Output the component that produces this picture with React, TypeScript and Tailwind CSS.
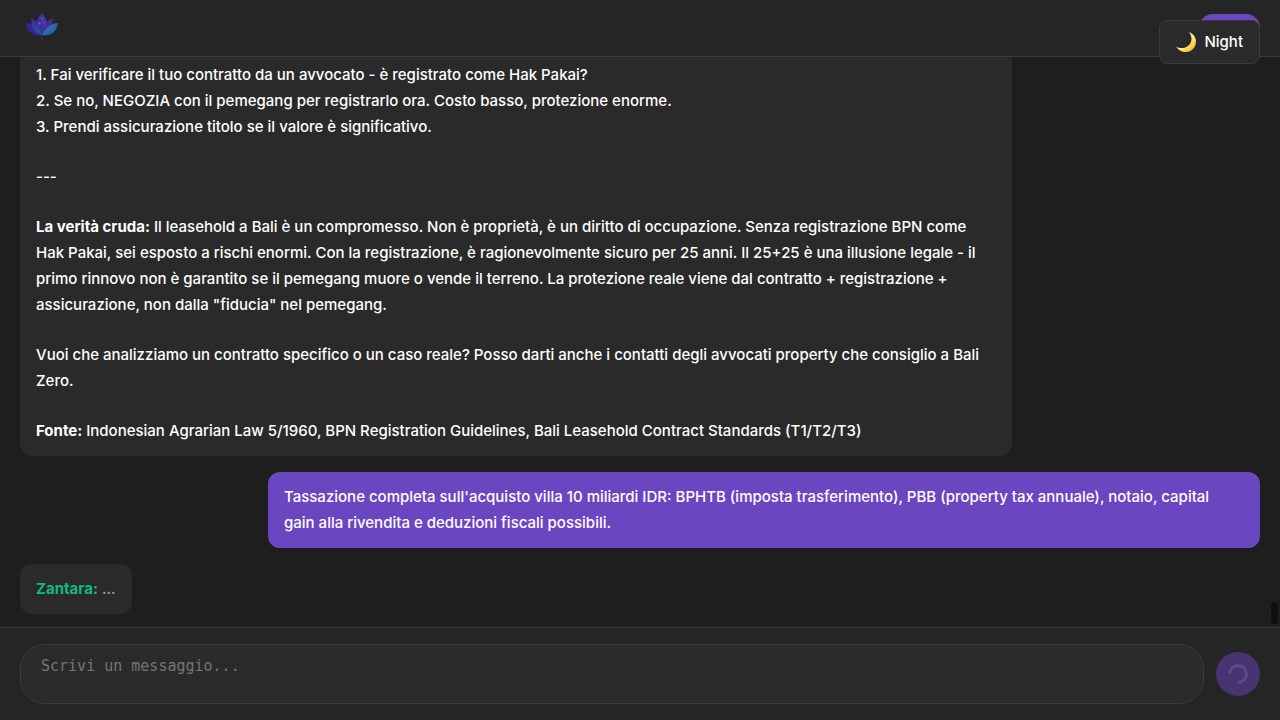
import type { ReactNode } from "react";

function LotusLogo() {
  return (
    <svg viewBox="0 0 36 36" className="h-9 w-9" aria-hidden="true">
      <path d="M17.700 24v8" stroke="#3d2a70" strokeWidth="1" />
      <path d="M2 13c1 6 4 11 10 12 2.500.4 4.500.5 6 .3C16 18 10 13 2 13z" fill="#33269a" />
      <path d="M34 13c-1 6-4 11-10 12-2.500.4-4.500.5-6 .3C20 18 26 13 34 13z" fill="#2a62a6" />
      <path d="M7.500 8c-.5 5 1 11 5 15 2 1.500 4 2 5.500 2C17 17 13 11 7.500 8z" fill="#41308f" />
      <path d="M28.500 8c.5 5-1 11-5 15-2 1.500-4 2-5.500 2C19 17 23 11 28.500 8z" fill="#432c96" />
      <path d="M18 3c-3.500 3.500-5.500 7.500-5.500 11.500 0 4 2.500 7.500 5.500 10.500 3-3 5.500-6.500 5.500-10.500C23.500 10.500 21.500 6.500 18 3z" fill="#472f9c" />
      <path d="M8 14c1 5 4 9.500 10 11.200-.5-4.200-4.500-9.200-10-11.200z" fill="#2d4aa2" />
      <path d="M31 13.500c-6 1.500-11 6-13 11.700 7-.2 11.500-5.200 13-11.700z" fill="#2b6cae" />
      <path d="M17 14c-1.500 3-1 7 1 11 1-4 1-8-1-11z" fill="#2c3f92" />
      <circle cx="18" cy="8.500" r="0.800" fill="#6d7fd6" />
      <circle cx="15.500" cy="13.500" r="1" fill="#5f79d2" />
      <circle cx="19.500" cy="12.500" r="0.700" fill="#5f79d2" />
    </svg>
  );
}

function MoonIcon() {
  return (
    <svg viewBox="0 0 20 20" className="h-5 w-5" aria-hidden="true">
      <defs>
        <linearGradient id="moon" x1="0.3" y1="0.3" x2="1" y2="1">
          <stop offset="0.3" stopColor="#fff0a0" />
          <stop offset="0.6" stopColor="#fcd440" />
          <stop offset="1" stopColor="#e0a030" />
        </linearGradient>
      </defs>
      <path
        d="M13 0C17.500 2 20 5.500 20 9.500C20 15.500 15.500 20 10 20C5.500 20 2 18 0 14.500C2 15.800 4.500 16.300 7 16C12 15.500 15.500 11.500 15.500 7C15.500 4.500 14.800 2.200 13 0z"
        fill="url(#moon)"
      />
    </svg>
  );
}

function Bubble({ mine = false, children }: { mine?: boolean; children: ReactNode }) {
  return (
    <article
      className={
        mine
          ? "w-fit max-w-4/5 shrink-0 self-end rounded-xl bg-[#6b46c1] px-4 py-3"
          : "flex w-fit max-w-4/5 shrink-0 flex-col gap-6 self-start rounded-xl bg-[#2a2a2a] px-4 py-3"
      }
    >
      {children}
    </article>
  );
}

export default function App() {
  return (
    <div className="flex h-screen flex-col bg-[#1e1e1e] font-['Inter',sans-serif] text-[15px] leading-[26px] font-medium text-white">
      <header className="relative flex h-[57px] shrink-0 items-center justify-between border-b border-[#3a3a3a] bg-[#252525] px-5">
        <a href="#home" aria-label="Zantara" className="pl-1">
          <LotusLogo />
        </a>
        <button type="button" aria-label="Account" className="h-7 w-[61px] rounded-2xl bg-[#6b46c1]" />
        <button
          type="button"
          className="absolute top-5 right-5 z-10 flex h-11 items-center gap-2 rounded-lg border border-[#3a3a3a] bg-[#2a2a2a] px-4"
        >
          <MoonIcon />
          Night
        </button>
      </header>

      <main className="relative flex min-h-0 flex-1 flex-col justify-end gap-4 overflow-hidden px-5 pb-[13px]">
        <Bubble>
          <p>
            1. Fai verificare il tuo contratto da un avvocato - è registrato come Hak Pakai?
            <br />
            2. Se no, NEGOZIA con il pemegang per registrarlo ora. Costo basso, protezione enorme.
            <br />
            3. Prendi assicurazione titolo se il valore è significativo.
          </p>
          <p>---</p>
          <p>
            <strong>La verità cruda:</strong> Il leasehold a Bali è un compromesso. Non è proprietà, è un diritto di
            occupazione. Senza registrazione BPN come Hak Pakai, sei esposto a rischi enormi. Con la registrazione, è
            ragionevolmente sicuro per 25 anni. Il 25+25 è una illusione legale - il primo rinnovo non è garantito se il
            pemegang muore o vende il terreno. La protezione reale viene dal contratto + registrazione + assicurazione,
            non dalla "fiducia" nel pemegang.
          </p>
          <p>
            Vuoi che analizziamo un contratto specifico o un caso reale? Posso darti anche i contatti degli avvocati
            property che consiglio a Bali Zero.
          </p>
          <p>
            <strong>Fonte:</strong> Indonesian Agrarian Law 5/1960, BPN Registration Guidelines, Bali Leasehold Contract
            Standards (T1/T2/T3)
          </p>
        </Bubble>
        <Bubble mine>
          <p>
            Tassazione completa sull'acquisto villa 10 miliardi IDR: BPHTB (imposta trasferimento), PBB (property tax
            annuale), notaio, capital gain&nbsp;alla rivendita e deduzioni fiscali possibili.
          </p>
        </Bubble>
        <Bubble>
          <p className="text-[#a0a0a0]">
            <strong className="text-[#10b981]">Zantara:</strong> ...
          </p>
        </Bubble>
        <div aria-hidden="true" className="absolute right-0.5 bottom-[3px] h-[22px] w-[7px] rounded-full bg-[#101010]" />
      </main>

      <form className="flex shrink-0 items-center gap-3 border-t border-[#3a3a3a] bg-[#252525] px-5 py-4">
        <textarea
          aria-label="Messaggio"
          placeholder="Scrivi un messaggio..."
          className="h-[60px] min-w-0 flex-1 resize-none rounded-3xl border border-[#3a3a3a] bg-[#2a2a2a] px-5 py-3 font-['DejaVu_Sans_Mono',monospace] text-[15px] leading-[18px] font-normal placeholder:text-[#757575]"
        />
        <button
          type="button"
          aria-label="Invia"
          className="flex size-11 shrink-0 items-center justify-center rounded-full bg-[#483471]"
        >
          <svg viewBox="0 0 20 20" className="size-5" fill="none" aria-hidden="true">
            <path d="M1.500 10a8.500 8.500 0 1 1 8.500 8.500" stroke="#604b88" strokeWidth="3" />
          </svg>
        </button>
      </form>
    </div>
  );
}
